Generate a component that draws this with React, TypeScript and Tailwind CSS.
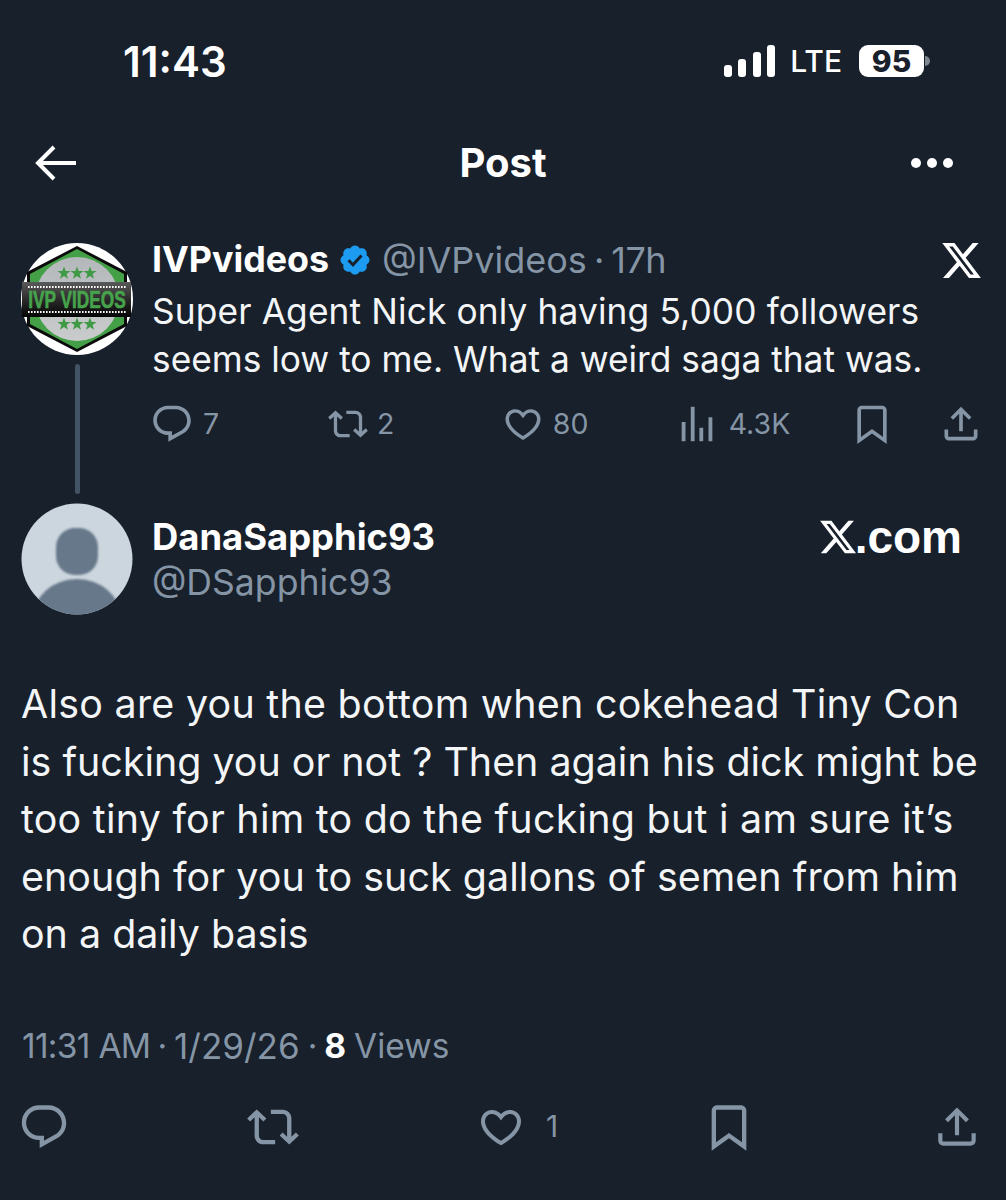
const PATHS = {
  reply:
    "M1.751 10c0-4.42 3.584-8 8.005-8h4.366c4.49 0 8.129 3.64 8.129 8.13 0 2.96-1.607 5.68-4.196 7.11l-8.054 4.46v-3.69h-.067c-4.49.1-8.183-3.51-8.183-8.01zm8.005-6c-3.317 0-6.005 2.69-6.005 6 0 3.37 2.77 6.08 6.138 6.01l.351-.01h1.761v2.3l5.087-2.81c1.951-1.08 3.163-3.13 3.163-5.36 0-3.39-2.744-6.13-6.129-6.13H9.756z",
  retweet:
    "M4.5 3.88l4.432 4.14-1.364 1.46L5.5 7.55V16c0 1.1.896 2 2 2H13v2H7.5c-2.209 0-4-1.79-4-4V7.55L1.432 9.48.068 8.02 4.5 3.88zM16.5 6H11V4h5.5c2.209 0 4 1.79 4 4v8.45l2.068-1.93 1.364 1.46-4.432 4.14-4.432-4.14 1.364-1.46 2.068 1.93V8c0-1.1-.896-2-2-2z",
  like:
    "M16.697 5.5c-1.222-.06-2.679.51-3.89 2.16l-.805 1.09-.806-1.09C9.984 6.01 8.526 5.44 7.304 5.5c-1.243.07-2.349.78-2.91 1.91-.552 1.12-.633 2.78.479 4.82 1.074 1.97 3.257 4.27 7.129 6.61 3.87-2.34 6.052-4.64 7.126-6.61 1.111-2.04 1.03-3.7.477-4.82-.561-1.13-1.666-1.84-2.908-1.91zm4.187 7.69c-1.351 2.48-4.001 5.12-8.379 7.67l-.503.3-.504-.3c-4.379-2.55-7.029-5.19-8.382-7.67-1.36-2.5-1.41-4.86-.514-6.67.887-1.79 2.647-2.91 4.601-3.01 1.651-.09 3.368.56 4.798 2.01 1.429-1.45 3.146-2.1 4.796-2.01 1.954.1 3.714 1.22 4.601 3.01.896 1.81.846 4.17-.514 6.67z",
  views: "M8.75 21V3h2v18h-2zM18 21V8.5h2V21h-2zM4 21l.004-10h2L6 21H4zm9.248 0v-7h2v7h-2z",
  bookmark:
    "M4 4.5C4 3.12 5.119 2 6.5 2h11C18.881 2 20 3.12 20 4.5v18.44l-8-5.71-8 5.71V4.5zM6.5 4c-.276 0-.5.22-.5.5v14.56l6-4.29 6 4.29V4.5c0-.28-.224-.5-.5-.5h-11z",
  share:
    "M12 2.59l5.7 5.7-1.41 1.42L13 6.41V16h-2V6.41l-3.3 3.3-1.41-1.42L12 2.59zM21 15l-.02 3.51c0 1.38-1.12 2.49-2.5 2.49H5.5C4.11 21 3 19.88 3 18.5V15h2v3.5c0 .28.22.5.5.5h12.98c.28 0 .5-.22.5-.5L19 15h2z",
  verified:
    "M20.396 11c-.018-.646-.215-1.275-.57-1.816-.354-.54-.852-.972-1.438-1.246.223-.607.27-1.264.14-1.897-.131-.634-.437-1.218-.882-1.687-.47-.445-1.053-.75-1.687-.882-.633-.13-1.29-.083-1.897.14-.273-.587-.704-1.086-1.245-1.44S11.647 1.62 11 1.604c-.646.017-1.273.213-1.813.568s-.969.854-1.24 1.44c-.608-.223-1.267-.272-1.902-.14-.635.13-1.22.436-1.69.882-.445.47-.749 1.055-.878 1.688-.13.633-.08 1.29.144 1.896-.587.274-1.087.705-1.443 1.245-.356.54-.555 1.17-.574 1.817.02.647.218 1.276.574 1.817.356.54.856.972 1.443 1.245-.224.606-.274 1.263-.144 1.896.13.634.433 1.218.877 1.688.47.443 1.054.747 1.687.878.633.132 1.29.084 1.897-.136.274.586.705 1.084 1.246 1.439.54.354 1.17.551 1.816.569.647-.016 1.276-.213 1.817-.567s.972-.854 1.245-1.44c.604.239 1.266.296 1.903.164.636-.132 1.22-.447 1.68-.907.46-.46.776-1.044.908-1.681s.075-1.299-.165-1.903c.586-.274 1.084-.705 1.439-1.246.354-.54.551-1.17.569-1.816z",
  x: "M18.244 2.25h3.308l-7.227 8.26 8.502 11.24H16.17l-5.214-6.817L4.99 21.75H1.68l7.73-8.835L1.254 2.25H8.08l4.713 6.231zm-1.161 17.52h1.833L7.084 4.126H5.117z",
};

function Icon({ d, className }: { d: string; className: string }) {
  return (
    <svg viewBox="0 0 24 24" fill="currentColor" className={className}>
      <path d={d} />
    </svg>
  );
}

function LogoAvatar() {
  const stars = [43, 56, 69];
  return (
    <svg viewBox="0 0 112 112" className="h-[112px] w-[112px] shrink-0">
      <defs>
        <linearGradient id="band" x1="0" y1="0" x2="0" y2="1">
          <stop offset="0" stopColor="#5a5a5a" />
          <stop offset="0.5" stopColor="#2a2a2a" />
          <stop offset="1" stopColor="#050505" />
        </linearGradient>
        <linearGradient id="disc" x1="0" y1="0" x2="0" y2="1">
          <stop offset="0" stopColor="#b4b8bb" />
          <stop offset="1" stopColor="#c9cbcc" />
        </linearGradient>
      </defs>
      <circle cx="56" cy="56" r="56" fill="#fff" />
      <polygon points="56,3 106,29 106,83 56,109 6,83 6,29" fill="#0b0b0b" />
      <polygon points="56,6 103,31 103,81 56,106 9,81 9,31" fill="#44a047" />
      <circle cx="56" cy="56" r="42" fill="url(#disc)" />
      {stars.map((x) => (
        <polygon
          key={x}
          points="0,-6.5 1.7,-2 6.5,-2 2.6,1 4,5.8 0,3 -4,5.8 -2.6,1 -6.5,-2 -1.7,-2"
          transform={`translate(${x} 30)`}
          fill="#3f9a45"
        />
      ))}
      {stars.map((x) => (
        <polygon
          key={x}
          points="0,-6.5 1.7,-2 6.5,-2 2.6,1 4,5.8 0,3 -4,5.8 -2.6,1 -6.5,-2 -1.7,-2"
          transform={`translate(${x} 81)`}
          fill="#3f9a45"
        />
      ))}
      <rect x="1" y="39" width="109" height="35" fill="url(#band)" />
      <line x1="7" y1="44" x2="105" y2="44" stroke="#fff" strokeWidth="2" strokeDasharray="1.6 1.4" />
      <line x1="7" y1="69" x2="105" y2="69" stroke="#fff" strokeWidth="2" strokeDasharray="1.6 1.4" />
      <text
        transform="translate(56 65) scale(0.75 1)"
        fontSize="23"
        fontWeight="700"
        fill="#46a34b"
        stroke="#46a34b"
        strokeWidth="0.6"
        textAnchor="middle"
        fontFamily="'Liberation Sans', sans-serif"
      >
        IVP VIDEOS
      </text>
    </svg>
  );
}

function DefaultAvatar() {
  return (
    <svg viewBox="0 0 112 112" className="h-[112px] w-[112px] shrink-0">
      <defs>
        <clipPath id="round">
          <circle cx="56" cy="56" r="55.5" />
        </clipPath>
        <filter id="soft">
          <feGaussianBlur stdDeviation="0.8" />
        </filter>
      </defs>
      <circle cx="56" cy="56" r="55.5" fill="#ccd6de" />
      <g clipPath="url(#round)" filter="url(#soft)" fill="#66788a">
        <rect x="35" y="25" width="42" height="47" rx="19" />
        <ellipse cx="56" cy="115" rx="44" ry="39" />
      </g>
    </svg>
  );
}

function Stat({ d, icon, count, width }: { d: string; icon: string; count?: string; width: string }) {
  return (
    <div className={`flex items-center text-[#8595a5] ${width}`}>
      <Icon d={d} className={icon} />
      {count && <span className="ml-[9px] text-[28.5px]">{count}</span>}
    </div>
  );
}

export default function App() {
  return (
    <div className="flex h-[1200px] w-[1006px] flex-col overflow-hidden bg-[#17202b] font-['Inter',sans-serif] text-white">
      {/* status bar */}
      <div className="flex h-[122px] items-center pl-[123px] pr-[76px]">
        <span className="text-[42px] font-semibold">11:43</span>
        <div className="ml-auto flex items-center">
          <svg viewBox="0 0 52 32" className="h-[32px] w-[52px]" fill="#fff">
            <rect x="0" y="20" width="8" height="12" rx="3" />
            <rect x="14" y="14" width="8" height="18" rx="3" />
            <rect x="29" y="7" width="8" height="25" rx="3" />
            <rect x="43" y="0" width="8" height="32" rx="3" />
          </svg>
          <span className="ml-[14px] text-[30px] font-medium leading-none">LTE</span>
          <div className="ml-[17px] flex h-[32px] w-[65px] items-center justify-center rounded-[9px] bg-white text-[30px] font-extrabold text-[#17202b]">
            95
          </div>
          <div className="ml-[1px] h-[10px] w-[5px] rounded-r-full bg-[#7d8790]" />
        </div>
      </div>

      {/* nav bar */}
      <div className="grid h-[82px] grid-cols-3 items-center pl-[34px] pr-[53px]">
        <svg viewBox="0 0 44 36" className="h-[36px] w-[44px]" fill="none" stroke="#fff" strokeWidth="4">
          <path d="M42 18H5M20 2 4 18l16 16" />
        </svg>
        <span className="justify-self-center pl-[19px] text-[40px] font-bold">Post</span>
        <div className="flex gap-[6px] justify-self-end">
          <span className="h-[10px] w-[10px] rounded-full bg-white" />
          <span className="h-[10px] w-[10px] rounded-full bg-white" />
          <span className="h-[10px] w-[10px] rounded-full bg-white" />
        </div>
      </div>

      {/* parent tweet */}
      <div className="mt-[39px] flex pl-[21px] pr-[23px]">
        <div className="flex w-[112px] shrink-0 flex-col items-center">
          <LogoAvatar />
          <div className="mt-[9px] h-[130px] w-[5px] rounded-full bg-[#425364]" />
        </div>
        <div className="ml-[19px] min-w-0 flex-1">
          <div className="flex h-[34px] items-center">
            <span className="text-[35.8px] font-bold">IVPvideos</span>
            <span className="relative ml-[8px] flex h-[36px] w-[36px] items-center justify-center">
              <span className="absolute h-[14px] w-[14px] bg-white" />
              <svg viewBox="0 0 22 22" className="relative h-[34px] w-[34px]">
                <path d={PATHS.verified} fill="#1d9bf0" />
                <path d="M6.8 11.2l2.9 2.9 5.5-6" fill="none" stroke="#17202b" strokeWidth="1.9" />
              </svg>
            </span>
            <span className="ml-[9px] text-[36px] text-[#8595a5]">@IVPvideos</span>
            <span className="ml-[7px] text-[36px] text-[#8595a5]">·</span>
            <span className="ml-[7px] text-[36px] tracking-[-0.5px] text-[#8595a5]">17h</span>
            <Icon d={PATHS.x} className="ml-auto h-[43px] w-[43px]" />
          </div>
          <p className="mt-[11px] text-[35.3px] leading-[48px] text-[#f3f5f7]">
            <span className="tracking-[0.12px]">Super Agent Nick only having 5,000 followers</span>
            <br />
            seems low to me. What a weird saga that was.
          </p>
          <div className="mt-[17px] flex items-center">
            <Stat d={PATHS.reply} icon="ml-[-2px] h-[44px] w-[44px]" count="7" width="w-[176px]" />
            <Stat d={PATHS.retweet} icon="h-[40px] w-[40px]" count="2" width="w-[176px]" />
            <Stat d={PATHS.like} icon="ml-[-2px] h-[42px] w-[42px]" count="80" width="w-[176px]" />
            <Stat d={PATHS.views} icon="ml-[-6px] h-[46px] w-[46px]" count="4.3K" width="w-[170px]" />
            <Stat d={PATHS.bookmark} icon="h-[44px] w-[44px]" width="w-[89.5px]" />
            <Stat d={PATHS.share} icon="h-[44px] w-[44px]" width="w-[44px]" />
          </div>
        </div>
      </div>

      {/* main tweet */}
      <div className="mt-[9px] flex pl-[21px] pr-[44px]">
        <DefaultAvatar />
        <div className="ml-[19px] min-w-0 flex-1 pt-[12px]">
          <div className="flex items-center justify-between">
            <span className="text-[36.4px] font-bold leading-[44px]">DanaSapphic93</span>
            <span className="flex items-center">
              <Icon d={PATHS.x} className="h-[40px] w-[40px]" />
              <span className="ml-[-3px] font-['Liberation_Sans',sans-serif] text-[46px] font-bold leading-[44px]">.com</span>
            </span>
          </div>
          <div className="text-[35.6px] leading-[48px] text-[#8595a5]">@DSapphic93</div>
        </div>
      </div>

      <p className="mt-[61px] pl-[21px] text-[39.4px] leading-[57.6px] text-[#f3f5f7]">
        <span className="tracking-[0.26px]">Also are you the bottom when cokehead Tiny Con</span>
        <br />
        is fucking you or not ? Then again his dick might be
        <br />
        <span className="tracking-[0.25px]">too tiny for him to do the fucking but i am sure it’s</span>
        <br />
        <span className="tracking-[0.06px]">enough for you to suck gallons of semen from him</span>
        <br />
        on a daily basis
      </p>

      <div className="mt-[58px] flex pl-[22px] text-[33.5px] leading-[48px] text-[#8595a5]">
        <span className="tracking-[-0.7px]">11:31 AM</span>
        <span className="ml-[7px]">·</span>
        <span className="ml-[7px] text-[35px]">1/29/26</span>
        <span className="ml-[8px]">·</span>
        <span className="ml-[7px] font-bold text-white">8</span>
        <span className="ml-[8px]">Views</span>
      </div>

      {/* main tweet actions */}
      <div className="mt-[31px] grid grid-cols-[229px_230px_226px_229px_50px] items-center pl-[18px] text-[#8595a5]">
        <Icon d={PATHS.reply} className="h-[52px] w-[52px]" />
        <Icon d={PATHS.retweet} className="h-[52px] w-[52px]" />
        <div className="flex items-center">
          <Icon d={PATHS.like} className="h-[48px] w-[48px]" />
          <span className="ml-[21px] text-[30px]">1</span>
        </div>
        <Icon d={PATHS.bookmark} className="h-[52px] w-[52px]" />
        <Icon d={PATHS.share} className="h-[50px] w-[50px]" />
      </div>
    </div>
  );
}
